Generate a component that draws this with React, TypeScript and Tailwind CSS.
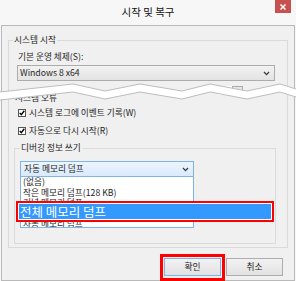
import React from 'react'

function Chevron() {
  return (
    <svg width="7" height="5" viewBox="0 0 7 5" className="shrink-0">
      <path d="M1 1 L3.5 3.6 L6 1" stroke="#3a3a3a" strokeWidth="1.3" fill="none" />
    </svg>
  )
}

function Check({ label }: { label: string }) {
  return (
    <div className="flex items-center gap-[3px] h-[10px] leading-[10px]">
      <span className="w-[8px] h-[8px] border border-[#555] bg-white flex items-center justify-center">
        <svg width="6" height="6" viewBox="0 0 6 6">
          <path d="M0.7 2.9 L2.3 4.7 L5.3 0.8" stroke="#000" strokeWidth="1.4" fill="none" />
        </svg>
      </span>
      <span>{label}</span>
    </div>
  )
}

const items = ['(없음)', '작은 메모리 덤프(128 KB)', '커널 메모리 덤프', '전체 메모리 덤프', '자동 메모리 덤프']

export default function App() {
  return (
    <div className="relative w-[296px] h-[281px] overflow-hidden flex flex-col bg-[#f7f7f7] text-[8.7px] text-[#1e1e1e] font-['Noto_Sans_CJK_KR',sans-serif]">
      {/* title bar */}
      <div className="relative h-[25px] shrink-0 flex items-center justify-center">
        <span className="text-[10.5px] leading-[12px] text-[#111] -mt-[1px]">시작 및 복구</span>
        <span className="absolute right-[5px] top-0 w-[16px] h-[13px] bg-[#c75050] flex items-center justify-center">
          <svg width="6" height="6" viewBox="0 0 6 6">
            <path d="M0.5 0.5 L5.5 5.5 M5.5 0.5 L0.5 5.5" stroke="#fff" strokeWidth="1.5" />
          </svg>
        </span>
      </div>

      {/* client area */}
      <div className="ml-[1px] w-[294px] flex-1 border border-[#b9b9b9] bg-[#f0f0f0] flex flex-col">
        {/* 시스템 시작 */}
        <fieldset className="ml-[6px] mt-[9px] w-[280px] border border-b-0 border-[#dadada]">
          <legend className="ml-[4px] px-[1px] leading-[10px]">시스템 시작</legend>
          <div className="pl-[9px] flex flex-col">
            <div className="mt-[7px] leading-[10px]">기본 운영 체제(S):</div>
            <div className="-ml-[1px] mt-[3px] w-[258px] h-[16px] border border-[#acacac] bg-gradient-to-b from-[#f2f2f2] to-[#e3e3e3] flex items-center pl-[2px] pr-[4px]">
              <span className="flex-1 leading-[10px]">Windows 8 x64</span>
              <Chevron />
            </div>
            <div className="mt-[5px] h-[6px] flex justify-end pr-[44px]">
              <div className="w-[13px] h-[9px] bg-white" />
              <div className="w-[11px] h-[9px] border border-[#acacac] bg-[#e6e6e6] flex items-center justify-center">
                <svg width="5" height="3" viewBox="0 0 5 3">
                  <path d="M0 3 L2.5 0 L5 3 Z" fill="#222" />
                </svg>
              </div>
            </div>
          </div>
        </fieldset>

        {/* 시스템 오류 */}
        <div className="ml-[6px] w-[280px] border border-t-0 border-[#dadada] flex flex-col pb-[3px]">
          <div className="pl-[6px] mt-[1px] leading-[10px]">시스템 오류</div>
          <div className="pl-[9px] mt-[5px]">
            <Check label="시스템 로그에 이벤트 기록(W)" />
          </div>
          <div className="pl-[9px] mt-[8px]">
            <Check label="자동으로 다시 시작(R)" />
          </div>

          <fieldset className="ml-[5px] mt-[7px] w-[262px] border border-[#dadada] pb-[15px]">
            <legend className="ml-[5px] px-[1px] leading-[10px]">디버깅 정보 쓰기</legend>
            <div className="relative ml-[5px] mt-[8px] w-[174px]">
              <div className="h-[16px] border border-[#7eb4ea] bg-gradient-to-b from-[#edf5fd] to-[#d9eafb] flex items-center pl-[3px] pr-[4px]">
                <span className="flex-1 leading-[10px]">자동 메모리 덤프</span>
                <Chevron />
              </div>
              <div className="h-[51px] border border-t-0 border-[#7eb4ea] bg-white overflow-hidden pl-[2px]">
                {items.map((t) => (
                  <div key={t} className="h-[10.5px] leading-[10.5px] whitespace-nowrap">
                    {t}
                  </div>
                ))}
              </div>

              {/* magnified callout */}
              <div className="absolute -left-[4px] top-[40px] w-[258px] h-[21px] border-2 border-[#ff0000] bg-white p-[1px]">
                <div className="h-full bg-[#3399ff] text-white text-[12.5px] leading-[15px] pl-[1px] whitespace-nowrap">
                  전체 메모리 덤프
                </div>
              </div>
            </div>
          </fieldset>
        </div>

        {/* buttons */}
        <div className="mt-[10px] flex justify-end gap-[5px] pr-[11px]">
          <div className="relative">
            <button className="w-[57px] h-[18px] border border-[#7fb2e5] bg-gradient-to-b from-[#f2f2f2] to-[#e2e2e2] leading-[10px] text-[#1e1e1e]">
              확인
            </button>
            <span className="pointer-events-none absolute -left-[4px] -right-[4px] -top-[4px] -bottom-[5px] border-[3px] border-[#ff0000]" />
          </div>
          <button className="w-[57px] h-[18px] border border-[#adadad] bg-gradient-to-b from-[#f2f2f2] to-[#e2e2e2] leading-[10px] text-[#1e1e1e]">
            취소
          </button>
        </div>
      </div>

      {/* torn-edge marker */}
      <svg className="absolute left-0 top-[78px] pointer-events-none" width="296" height="26" viewBox="0 78 296 26">
        <polygon
          points="0,92 73,84 105,91 140,84 182,91 210,84 247,91 280,84 296,89 296,97 280,92 247,99 210,92 182,99 140,92 105,99 73,92 0,100"
          fill="#fff"
        />
        <polyline points="0,92 73,84 105,91 140,84 182,91 210,84 247,91 280,84 296,89" fill="none" stroke="#bdbdbd" strokeWidth="1" />
        <polyline points="0,100 73,92 105,99 140,92 182,99 210,92 247,99 280,92 296,97" fill="none" stroke="#bdbdbd" strokeWidth="1" />
      </svg>
    </div>
  )
}
